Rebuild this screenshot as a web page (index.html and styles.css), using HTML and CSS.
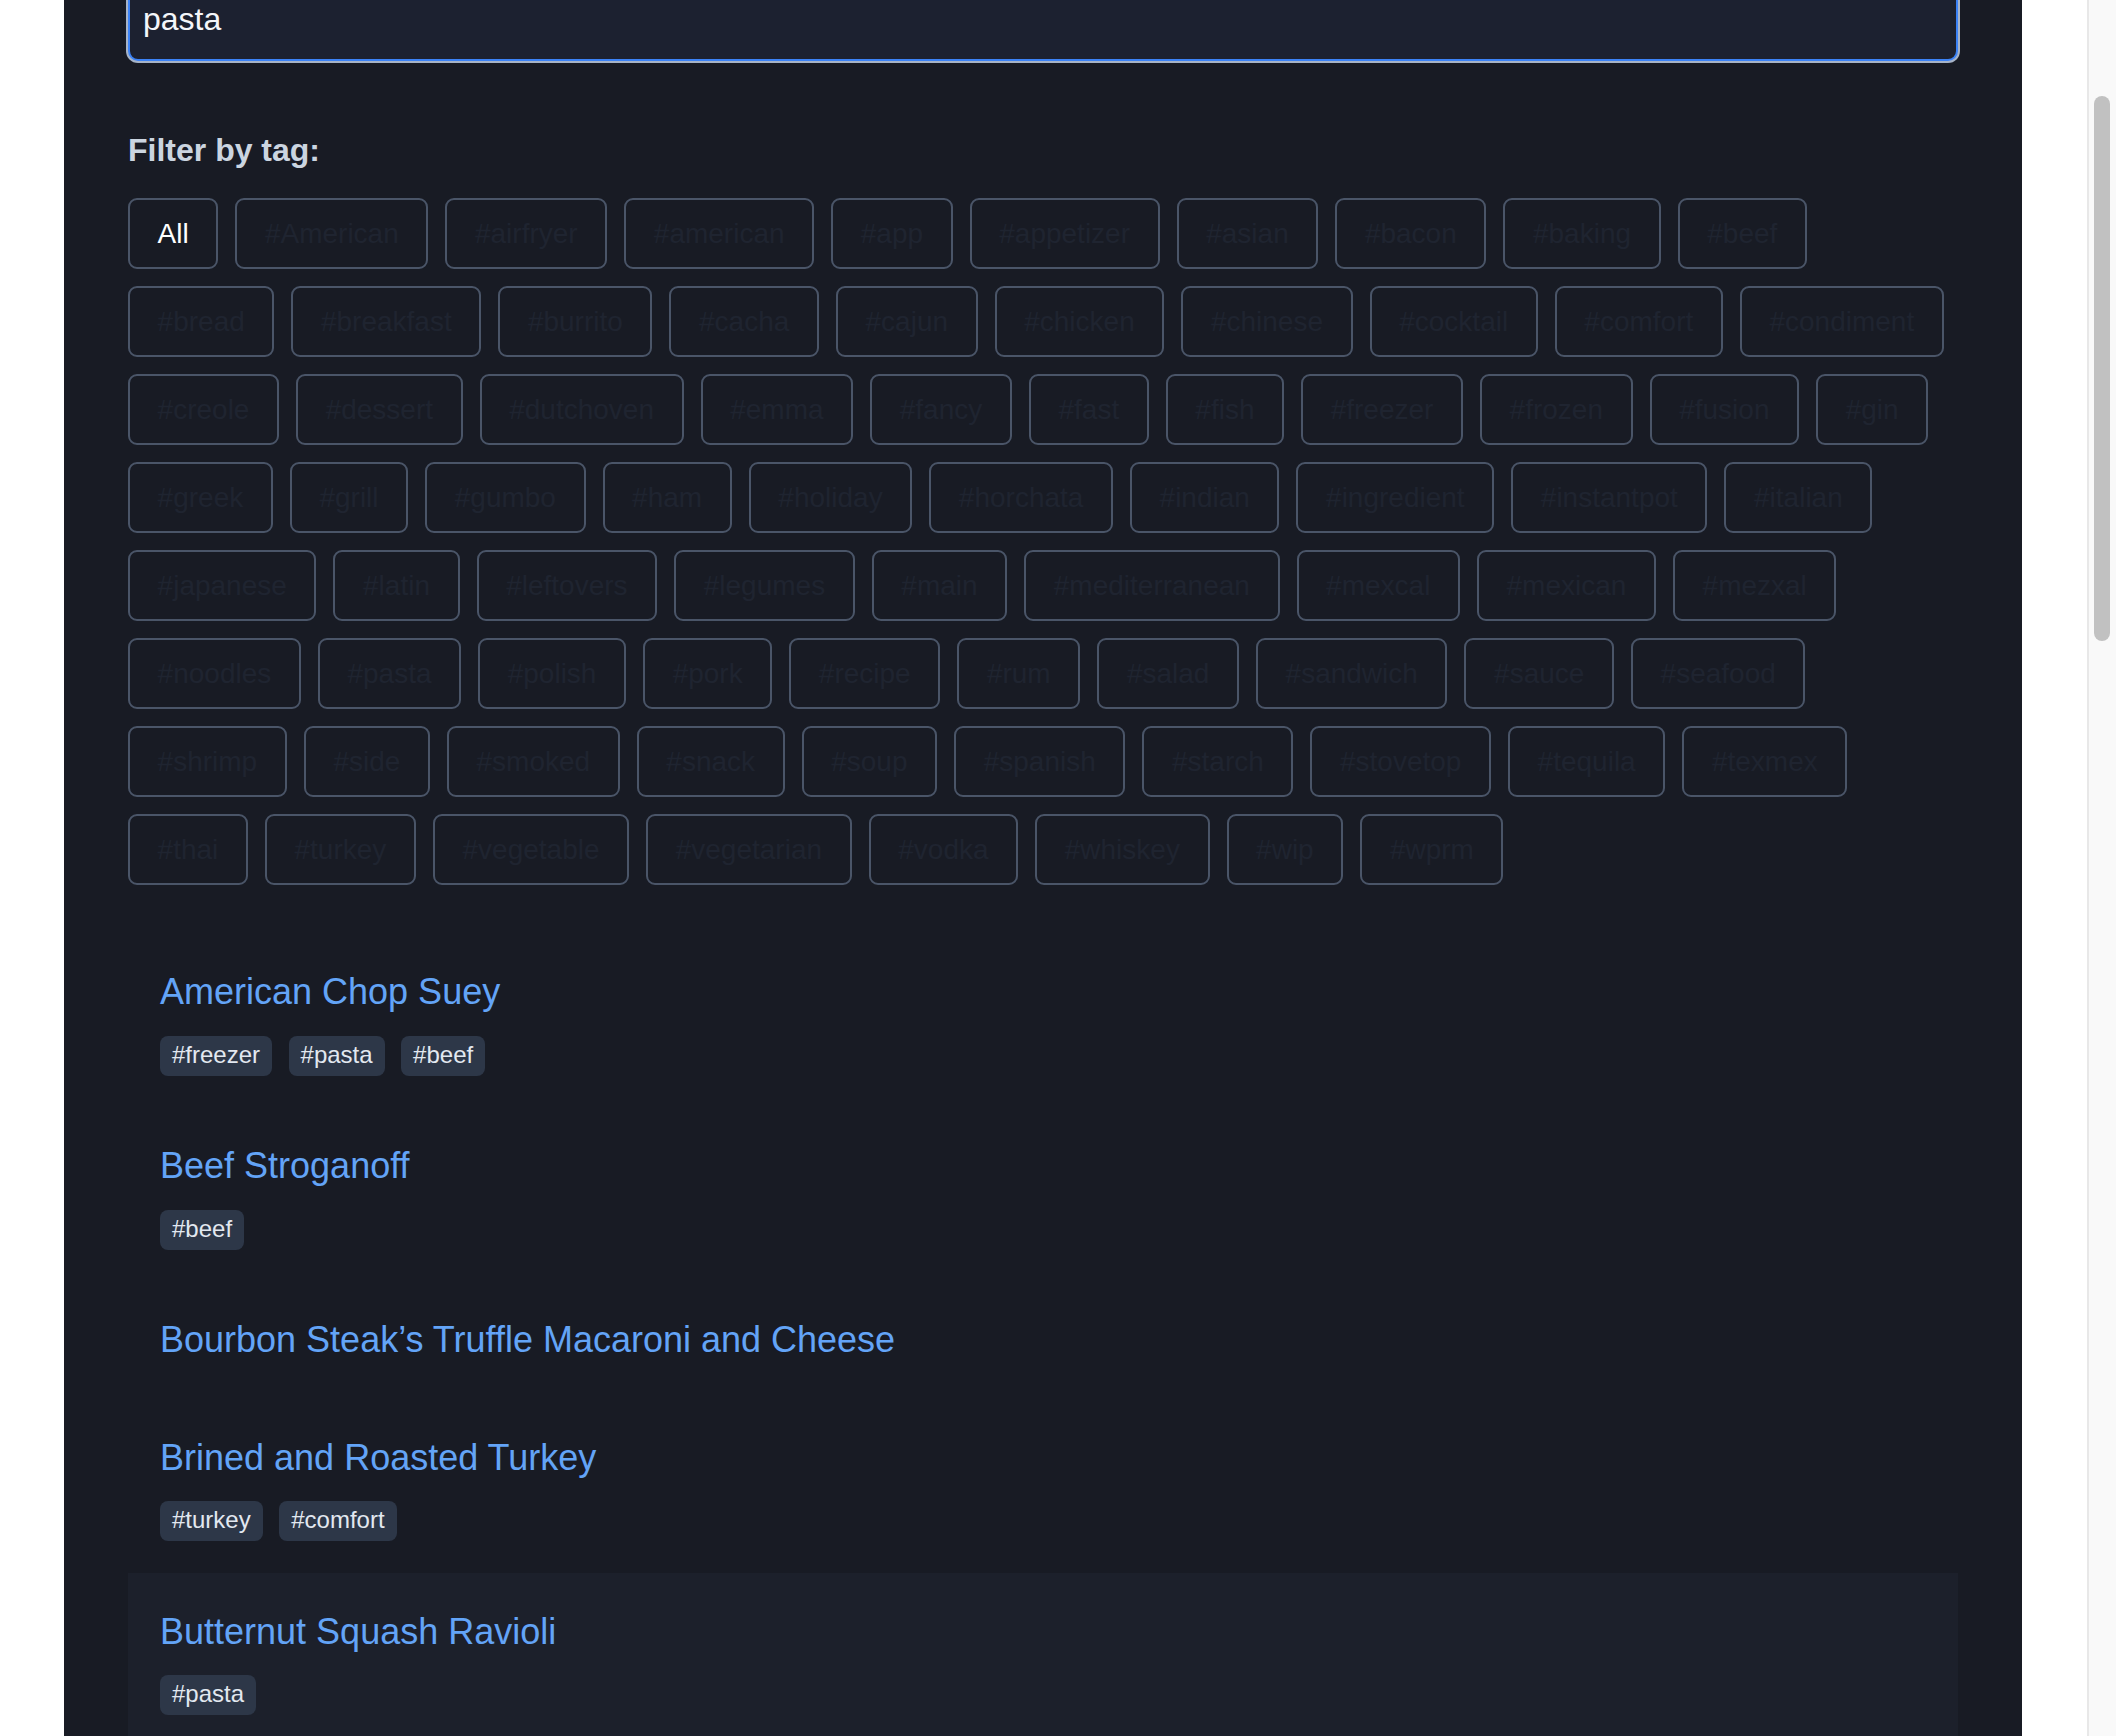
FILE: index.html
```html
<!DOCTYPE html>
<html lang="en">
<head>
<meta charset="utf-8">
<title>Recipes</title>
<link rel="stylesheet" href="styles.css">
</head>
<body>
<div class="viewport">
  <main class="panel">
    <div class="search"><input class="search-input" type="text" value="pasta" aria-label="Search recipes"></div>
    <h3 class="filter-label">Filter by tag:</h3>
    <div class="tag-cloud">
      <button class="tag tag-active">All</button>
      <button class="tag">#American</button>
      <button class="tag">#airfryer</button>
      <button class="tag">#american</button>
      <button class="tag">#app</button>
      <button class="tag">#appetizer</button>
      <button class="tag">#asian</button>
      <button class="tag">#bacon</button>
      <button class="tag">#baking</button>
      <button class="tag">#beef</button>
      <button class="tag">#bread</button>
      <button class="tag">#breakfast</button>
      <button class="tag">#burrito</button>
      <button class="tag">#cacha</button>
      <button class="tag">#cajun</button>
      <button class="tag">#chicken</button>
      <button class="tag">#chinese</button>
      <button class="tag">#cocktail</button>
      <button class="tag">#comfort</button>
      <button class="tag">#condiment</button>
      <button class="tag">#creole</button>
      <button class="tag">#dessert</button>
      <button class="tag">#dutchoven</button>
      <button class="tag">#emma</button>
      <button class="tag">#fancy</button>
      <button class="tag">#fast</button>
      <button class="tag">#fish</button>
      <button class="tag">#freezer</button>
      <button class="tag">#frozen</button>
      <button class="tag">#fusion</button>
      <button class="tag">#gin</button>
      <button class="tag">#greek</button>
      <button class="tag">#grill</button>
      <button class="tag">#gumbo</button>
      <button class="tag">#ham</button>
      <button class="tag">#holiday</button>
      <button class="tag">#horchata</button>
      <button class="tag">#indian</button>
      <button class="tag">#ingredient</button>
      <button class="tag">#instantpot</button>
      <button class="tag">#italian</button>
      <button class="tag">#japanese</button>
      <button class="tag">#latin</button>
      <button class="tag">#leftovers</button>
      <button class="tag">#legumes</button>
      <button class="tag">#main</button>
      <button class="tag">#mediterranean</button>
      <button class="tag">#mexcal</button>
      <button class="tag">#mexican</button>
      <button class="tag">#mezxal</button>
      <button class="tag">#noodles</button>
      <button class="tag">#pasta</button>
      <button class="tag">#polish</button>
      <button class="tag">#pork</button>
      <button class="tag">#recipe</button>
      <button class="tag">#rum</button>
      <button class="tag">#salad</button>
      <button class="tag">#sandwich</button>
      <button class="tag">#sauce</button>
      <button class="tag">#seafood</button>
      <button class="tag">#shrimp</button>
      <button class="tag">#side</button>
      <button class="tag">#smoked</button>
      <button class="tag">#snack</button>
      <button class="tag">#soup</button>
      <button class="tag">#spanish</button>
      <button class="tag">#starch</button>
      <button class="tag">#stovetop</button>
      <button class="tag">#tequila</button>
      <button class="tag">#texmex</button>
      <button class="tag">#thai</button>
      <button class="tag">#turkey</button>
      <button class="tag">#vegetable</button>
      <button class="tag">#vegetarian</button>
      <button class="tag">#vodka</button>
      <button class="tag">#whiskey</button>
      <button class="tag">#wip</button>
      <button class="tag">#wprm</button>
    </div>
    <ul class="recipes">
      <li class="recipe">
        <a class="recipe-title" href="#">American Chop Suey</a>
        <div class="chips"><span class="chip">#freezer</span><span class="chip">#pasta</span><span class="chip">#beef</span></div>
      </li>
      <li class="recipe">
        <a class="recipe-title" href="#">Beef Stroganoff</a>
        <div class="chips"><span class="chip">#beef</span></div>
      </li>
      <li class="recipe">
        <a class="recipe-title" href="#">Bourbon Steak’s Truffle Macaroni and Cheese</a>
        <div class="chips"></div>
      </li>
      <li class="recipe">
        <a class="recipe-title" href="#">Brined and Roasted Turkey</a>
        <div class="chips"><span class="chip">#turkey</span><span class="chip">#comfort</span></div>
      </li>
      <li class="recipe recipe-hl">
        <a class="recipe-title" href="#">Butternut Squash Ravioli</a>
        <div class="chips"><span class="chip">#pasta</span></div>
      </li>
    </ul>
  </main>
</div>
<div class="scrollbar"><div class="thumb"></div></div>
</body>
</html>
```
FILE: styles.css
```css
html, body {
  margin: 0;
  height: 100%;
}

body {
  display: flex;
  overflow: hidden;
  background: #ffffff;
  font-family: "Liberation Sans", Arial, Helvetica, sans-serif;
}

.viewport {
  flex: 1;
  min-width: 0;
  overflow: hidden;
}

.panel {
  display: flow-root;
  width: 1958px;
  box-sizing: border-box;
  margin-left: 64px;
  padding: 0 64px 64px;
  min-height: 100%;
  background: #181b24;
}

.search {
  margin-top: -23px;
}

.search-input {
  display: block;
  width: 100%;
  height: 84px;
  box-sizing: border-box;
  margin: 0;
  padding: 0 13px;
  font-family: "Liberation Sans", Arial, Helvetica, sans-serif;
  font-size: 32px;
  color: #f4f6fa;
  background: #1c2130;
  border: 2px solid #3b82f6;
  border-radius: 10px;
  box-shadow: 0 0 0 2px #a6b3c7;
  outline: none;
}

.filter-label {
  margin: 71px 0 0;
  font-size: 32px;
  font-weight: 700;
  line-height: 37px;
  color: #cbd5e0;
}

.tag-cloud {
  display: flex;
  flex-wrap: wrap;
  gap: 17.3px 17px;
  margin-top: 29.3px;
}

.tag {
  display: inline-flex;
  align-items: center;
  height: 70.7px;
  box-sizing: border-box;
  margin: 0;
  padding: 0 27.6px;
  font-family: "Liberation Sans", Arial, Helvetica, sans-serif;
  font-size: 28px;
  line-height: 32px;
  color: #1f2430;
  background: transparent;
  border: 2px solid #4a5568;
  border-radius: 9px;
}

.tag-active {
  color: #ffffff;
}

.recipes {
  list-style: none;
  margin: 49px 0 0;
  padding: 0;
}

.recipe {
  padding: 33.5px 32px 32px;
}

.recipe-hl {
  background: #1c202b;
}

.recipe-title {
  display: block;
  font-size: 36px;
  line-height: 50px;
  color: #63a4f7;
  text-decoration: none;
}

.chips {
  display: flex;
  flex-wrap: wrap;
  gap: 16.5px;
  padding-top: 2px;
}

.chip {
  margin-top: 16.5px;
  height: 40px;
  box-sizing: border-box;
  padding: 0 12px 2px;
  font-size: 24px;
  line-height: 38px;
  color: #e2e8f0;
  background: #2d3748;
  border-radius: 8px;
}

.scrollbar {
  flex: none;
  width: 27px;
  border-left: 2px solid #e8e8e8;
  background: #f9f9f9;
}

.thumb {
  width: 16px;
  height: 545px;
  margin: 96px 0 0 5px;
  border-radius: 8px;
  background: #c1c1c1;
}
```
